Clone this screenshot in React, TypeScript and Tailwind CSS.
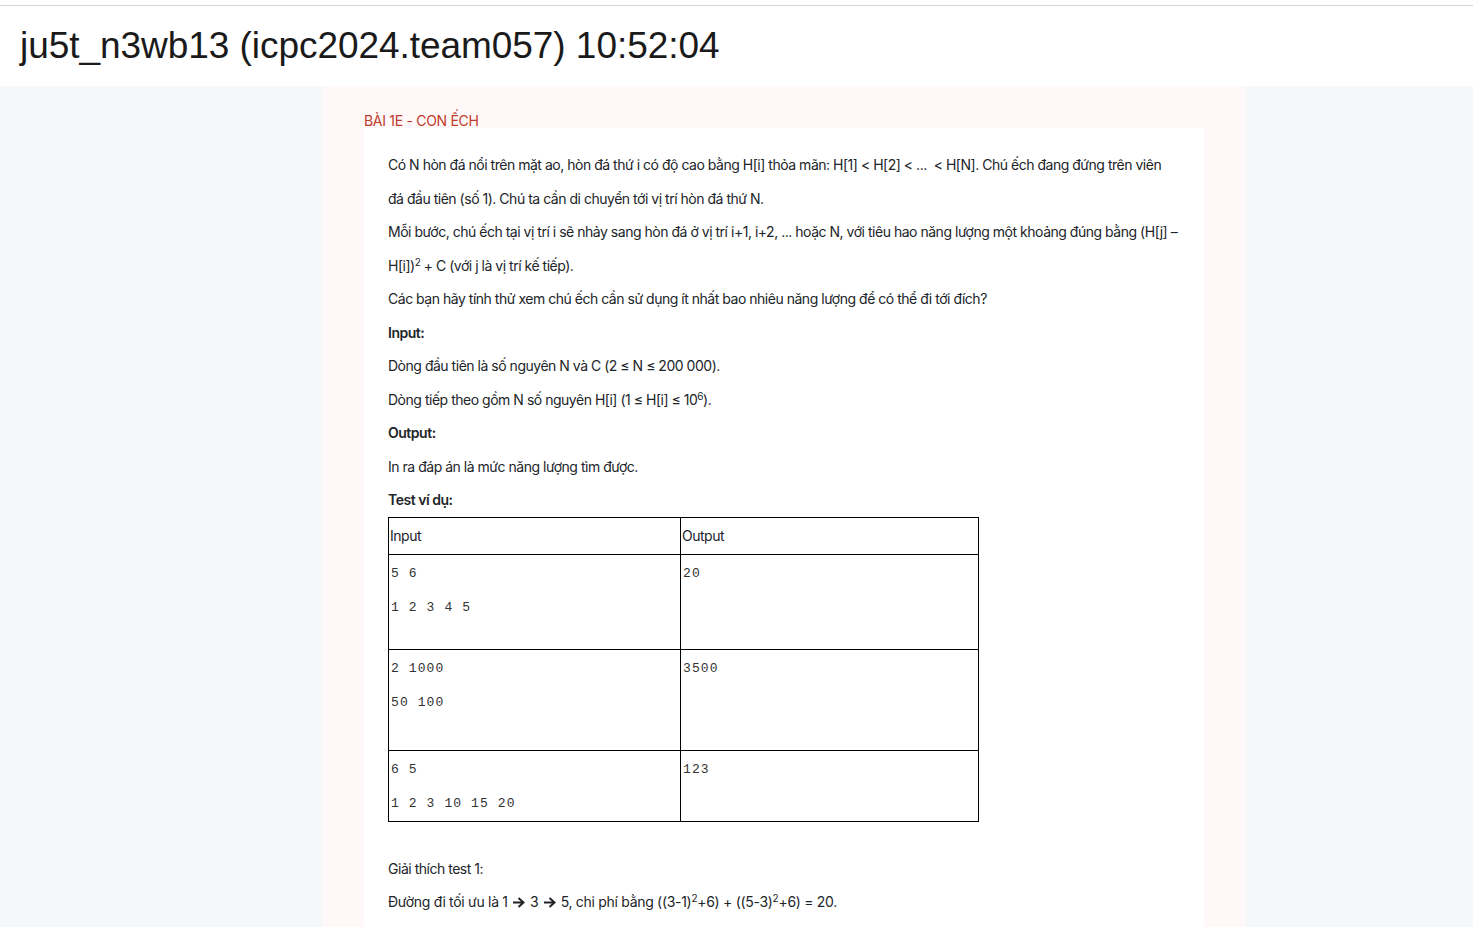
const rows = [
  { input: ["5 6", "1 2 3 4 5"], output: "20", h: "h-[95px]" },
  { input: ["2 1000", "50 100"], output: "3500", h: "h-[101px]" },
  { input: ["6 5", "1 2 3 10 15 20"], output: "123", h: "h-[71px]" },
]

const Arrow = () => (
  <svg width="13" height="11" viewBox="0 0 13 11" className="inline-block align-[-1px] mx-[1px]">
    <path d="M1 5.5H11M6.5 1L11.5 5.5L6.5 10" fill="none" stroke="#212529" strokeWidth="2" />
  </svg>
)

export default function App() {
  return (
    <div className="min-h-[927px] bg-[#f6f7f9] font-['Inter',sans-serif] text-[#212529]">
      {/* Header */}
      <div className="bg-white pt-[5px]">
        <div className="border-t border-[#d6d6d6] h-[81px] px-[20px] flex items-center">
          <h1 className="font-['Liberation_Sans',Arial,sans-serif] text-[37px] tracking-[-0.05px] text-[#1a1a1a] leading-none mt-[-1px]">
            ju5t_n3wb13 (icpc2024.team057) 10:52:04
          </h1>
        </div>
      </div>

      {/* Problem column */}
      <div className="ml-[322px] w-[924px] bg-[#fff8f8] px-[42px] pt-[27px] min-h-[841px]">
        <div className="text-[14px] tracking-[-0.3px] text-[#c0392b] leading-[15px]">BÀI 1E - CON ẾCH</div>
        <div className="bg-white px-[24px] pt-[20px] pb-[10px] text-[14px] leading-[33.5px] tracking-[-0.48px]">
          <p>
            Có N hòn đá nổi trên mặt ao, hòn đá thứ i có độ cao bằng H[i] thỏa mãn: H[1] &lt; H[2] &lt; ...&nbsp; &lt; H[N]. Chú ếch đang đứng trên viên đá đầu tiên (số 1). Chú ta cần di chuyển tới vị trí hòn đá thứ N.
          </p>
          <p>
            Mỗi bước, chú ếch tại vị trí i sẽ nhảy sang hòn đá ở vị trí i+1, i+2, ... hoặc N, với tiêu hao năng lượng một khoảng đúng bằng (H[j] – H[i])<sup className="text-[10px]">2</sup> + C (với j là vị trí kế tiếp).
          </p>
          <p>Các bạn hãy tính thử xem chú ếch cần sử dụng ít nhất bao nhiêu năng lượng để có thể đi tới đích?</p>
          <p className="font-semibold">Input:</p>
          <p>Dòng đầu tiên là số nguyên N và C (2 ≤ N ≤ 200 000).</p>
          <p>
            Dòng tiếp theo gồm N số nguyên H[i] (1 ≤ H[i] ≤ 10<sup className="text-[10px]">6</sup>).
          </p>
          <p className="font-semibold">Output:</p>
          <p>In ra đáp án là mức năng lượng tìm được.</p>
          <p className="font-semibold">Test ví dụ:</p>

          <table className="border-collapse border border-black w-[590px] table-fixed">
            <colgroup>
              <col className="w-[292px]" />
              <col className="w-[298px]" />
            </colgroup>
            <thead>
              <tr className="h-[37px]">
                <td className="border border-black px-[1px] align-middle leading-[20px] pt-[1px]">Input</td>
                <td className="border border-black px-[1px] align-middle leading-[20px] pt-[1px]">Output</td>
              </tr>
            </thead>
            <tbody>
              {rows.map((r, i) => (
                <tr key={i} className={r.h}>
                  <td className="border border-black align-top px-[2px] pt-[2px] font-['Liberation_Mono','Courier_New',monospace] text-[13px] tracking-[1.1px] leading-[34px] text-[#333]">
                    {r.input.map((l, j) => (
                      <div key={j} className="whitespace-pre">{l}</div>
                    ))}
                  </td>
                  <td className="border border-black align-top px-[2px] pt-[2px] font-['Liberation_Mono','Courier_New',monospace] text-[13px] tracking-[1.1px] leading-[34px] text-[#333]">
                    {r.output}
                  </td>
                </tr>
              ))}
            </tbody>
          </table>

          <p className="mt-[30px]">Giải thích test 1:</p>
          <p className="tracking-[-0.3px]">
            Đường đi tối ưu là 1 <Arrow /> 3 <Arrow /> 5, chi phí bằng ((3-1)<sup className="text-[10px]">2</sup>+6) + ((5-3)<sup className="text-[10px]">2</sup>+6) = 20.
          </p>
        </div>
      </div>
    </div>
  )
}
